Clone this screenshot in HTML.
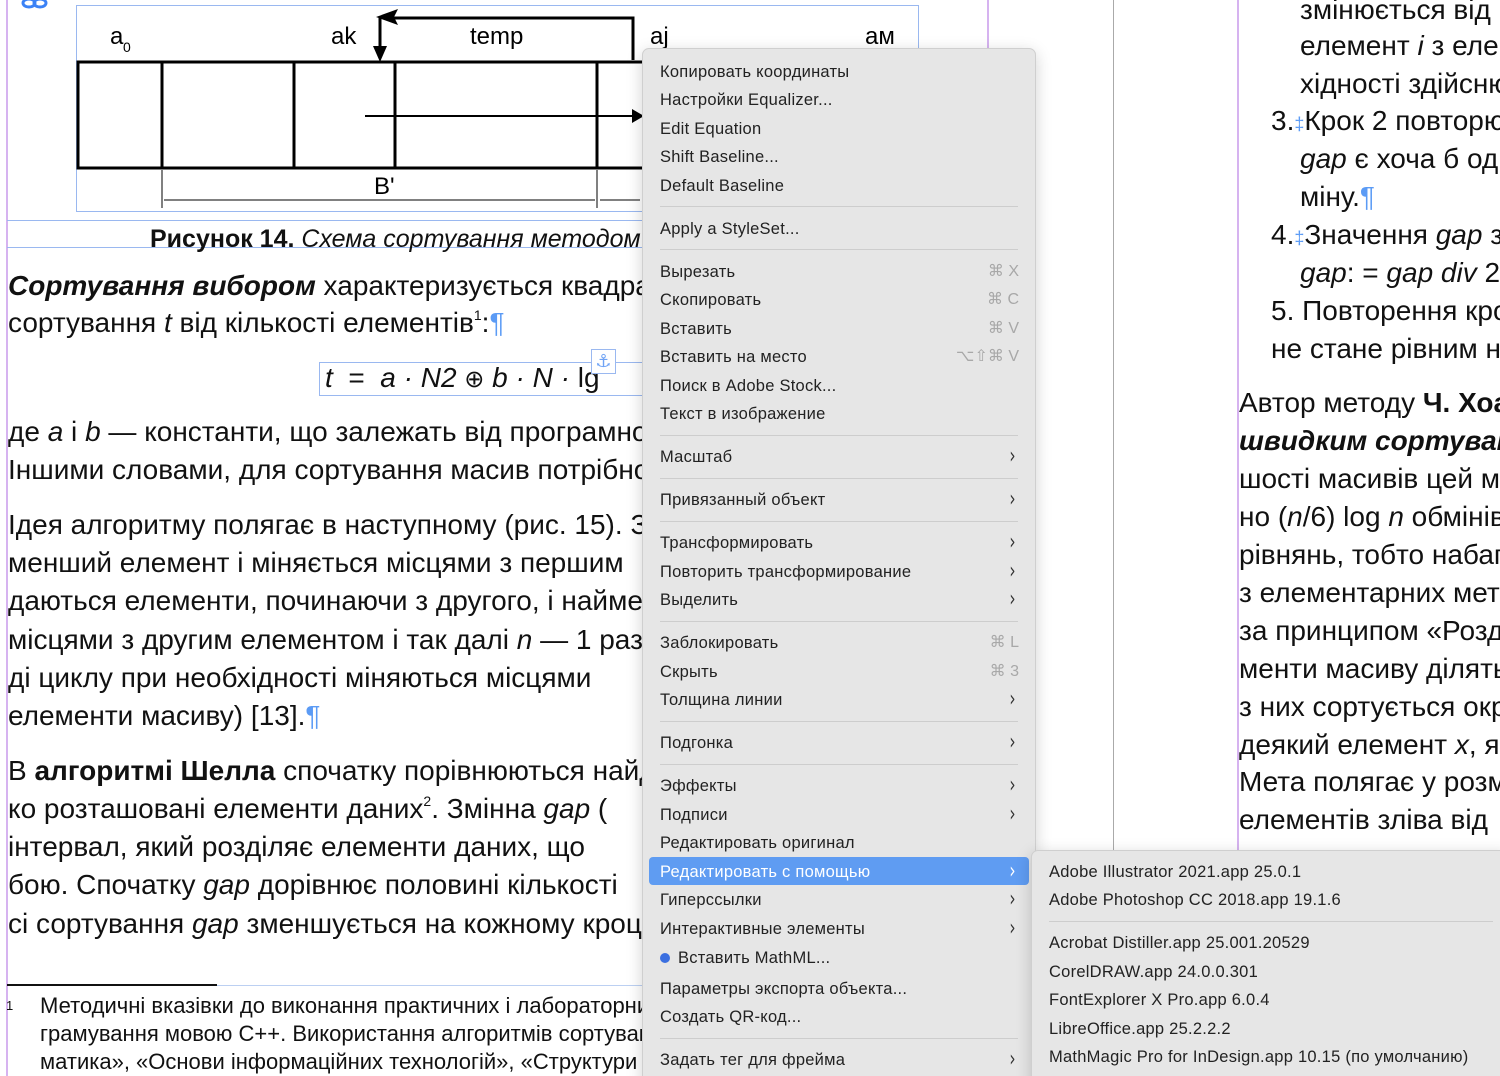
<!DOCTYPE html>
<html><head><meta charset="utf-8"><style>
*{margin:0;padding:0;box-sizing:border-box}
html,body{width:1500px;height:1076px;overflow:hidden}
body{background:#fff;position:relative;font-family:"Liberation Sans","DejaVu Sans",sans-serif;color:#111}
.t{position:absolute;white-space:nowrap;font-size:28px;line-height:38px;letter-spacing:0}
.fn{position:absolute;white-space:nowrap;font-size:22px;line-height:28px;letter-spacing:0}
.b{font-weight:bold}.i{font-style:italic}
sup{font-size:14px;line-height:0;vertical-align:0;position:relative;top:-12px}
.pm{color:#5b9bf5}
.menu{position:absolute;left:642px;top:48px;width:394px;height:1040px;background:#e6e6e6;border:1px solid #cfcfcf;border-radius:7px;box-shadow:0 4px 16px rgba(0,0,0,.18);z-index:5}
.sub{position:absolute;left:1031px;top:850px;width:480px;height:240px;background:#e6e6e6;border:1px solid #cfcfcf;border-radius:7px;box-shadow:0 4px 16px rgba(0,0,0,.18);z-index:6}
.mi{position:absolute;left:17px;font-size:16.5px;line-height:20px;color:#222;white-space:nowrap;letter-spacing:0.25px}
.sc{position:absolute;right:16px;font-size:16px;line-height:20px;color:#a8a8a8;white-space:nowrap}
.ar{position:absolute;right:18px;font-size:22px;line-height:20px;color:#333;font-family:"DejaVu Sans",sans-serif;transform:scaleX(0.7)}
.sep{position:absolute;left:17px;right:17px;height:1px;background:#cdcdcd}
.hl{position:absolute;left:6px;right:6px;height:28px;background:#5f9cf2;border-radius:4px}
</style></head><body>
<div style="position:absolute;left:6px;top:0;width:2px;height:1076px;background:#d6b3f0"></div>
<div style="position:absolute;left:987px;top:0;width:2px;height:50px;background:#d6b3f0"></div>
<div style="position:absolute;left:1113px;top:0;width:1px;height:1076px;background:#aaa"></div>
<div style="position:absolute;left:1237px;top:0;width:2px;height:1076px;background:#d6b3f0"></div>
<div style="position:absolute;left:7px;top:220px;width:640px;height:1px;background:#9ab8f0"></div>
<div style="position:absolute;left:7px;top:247px;width:640px;height:1px;background:#9ab8f0"></div>

<svg style="position:absolute;left:0;top:0" width="1000" height="220">
<rect x="76.5" y="5.5" width="842" height="206" fill="none" stroke="#9ab8f0"/>
<g fill="none" stroke="#3b82f6" stroke-width="3"><ellipse cx="29" cy="3" rx="6" ry="4"/><ellipse cx="40" cy="3" rx="6" ry="4"/></g>
<g stroke="#000" stroke-width="3" fill="none">
<rect x="78" y="62" width="600" height="106"/>
<line x1="162" y1="62" x2="162" y2="168"/><line x1="294" y1="62" x2="294" y2="168"/>
<line x1="395" y1="62" x2="395" y2="168"/><line x1="597" y1="62" x2="597" y2="168"/>
<polyline points="633,60 633,18 386,18"/>
<line x1="380" y1="18" x2="380" y2="52"/>
<line x1="365" y1="116" x2="636" y2="116" stroke-width="2"/>
</g>
<polygon points="376,17 398,9 394,17 398,25" fill="#000"/>
<polygon points="373,46 387,46 380,62" fill="#000"/>
<polygon points="644,116 632,109 632,123" fill="#000"/>
<g stroke="#000" stroke-width="1"><line x1="162" y1="170" x2="162" y2="208"/><line x1="597" y1="170" x2="597" y2="208"/><line x1="164" y1="200" x2="595" y2="200"/><line x1="600" y1="200" x2="640" y2="200"/></g>
<g font-family="Liberation Sans" font-size="24" fill="#000">
<text x="110" y="44">a</text><text x="123" y="52" font-size="14">0</text>
<text x="331" y="44">ak</text><text x="470" y="44">temp</text>
<text x="650" y="44">aj</text><text x="865" y="44">ам</text>
<text x="374" y="194">B'</text></g>
</svg>

<div class="t" style="top:220px;left:150px;font-size:25px"><span class="b">Рисунок 14.</span> <span class="i">Схема сортування методом вибору</span></div>
<div class="t" style="top:267px;left:8px"><span class="b i">Сортування вибором</span> характеризується квадратичною</div>
<div class="t" style="top:304px;left:8px">сортування <span class="i">t</span> від кількості елементів<sup>1</sup>:<span class="pm">¶</span></div>
<div style="position:absolute;left:319px;top:362px;width:330px;height:34px;border:1px solid #9ab8f0"></div>
<div class="t i" style="top:359px;left:325px">t&nbsp; <span style="font-style:normal">=</span>&nbsp; a · N2 <span style="font-style:normal;font-size:24px">⊕</span> b · N · <span style="font-style:normal">lg</span></div>
<div style="position:absolute;left:591px;top:349px;width:25px;height:25px;border:1px solid #9ab8f0;color:#6fa3f5;font-size:18px;text-align:center;line-height:22px;background:#fff">⚓</div>
<div class="t" style="top:413px;left:8px">де <span class="i">a</span> і <span class="i">b</span> — константи, що залежать від програмної</div>
<div class="t" style="top:451px;left:8px">Іншими словами, для сортування масив потрібно</div>
<div class="t" style="top:506px;left:8px">Ідея алгоритму полягає в наступному (рис. 15). Знаходиться</div>
<div class="t" style="top:544px;left:8px">менший елемент і міняється місцями з першим</div>
<div class="t" style="top:582px;left:8px">даються елементи, починаючи з другого, і найменший</div>
<div class="t" style="top:621px;left:8px">місцями з другим елементом і так далі <span class="i">n</span> — 1 раз</div>
<div class="t" style="top:659px;left:8px">ді циклу при необхідності міняються місцями</div>
<div class="t" style="top:697px;left:8px">елементи масиву) [13].<span class="pm">¶</span></div>
<div class="t" style="top:752px;left:8px">В <span class="b">алгоритмі Шелла</span> спочатку порівнюються найдалі</div>
<div class="t" style="top:790px;left:8px">ко розташовані елементи даних<sup>2</sup>. Змінна <span class="i">gap</span> (</div>
<div class="t" style="top:828px;left:8px">інтервал, який розділяє елементи даних, що</div>
<div class="t" style="top:866px;left:8px">бою. Спочатку <span class="i">gap</span> дорівнює половині кількості</div>
<div class="t" style="top:905px;left:8px">сі сортування <span class="i">gap</span> зменшується на кожному кроці</div>
<div style="position:absolute;left:7px;top:984px;width:210px;height:2px;background:#111"></div>
<div style="position:absolute;left:217px;top:985px;width:430px;height:1px;background:#bcd0f2"></div>
<div class="fn" style="top:992px;left:6px;font-size:13px">1</div>
<div class="fn" style="top:992px;left:40px">Методичні вказівки до виконання практичних і лабораторних</div>
<div class="fn" style="top:1020px;left:40px">грамування мовою С++. Використання алгоритмів сортування</div>
<div class="fn" style="top:1048px;left:40px">матика», «Основи інформаційних технологій», «Структури</div>

<div class="t" style="top:-9px;left:1300px">змінюється від</div>
<div class="t" style="top:27px;left:1300px">елемент <span class="i">i</span> з елементом</div>
<div class="t" style="top:65px;left:1300px">хідності здійснюється</div>
<div class="t" style="top:102px;left:1271px">3.<span class="pm" style="font-size:18px">‡</span>Крок 2 повторюється</div>
<div class="t" style="top:140px;left:1300px"><span class="i">gap</span> є хоча б одна</div>
<div class="t" style="top:178px;left:1300px">міну.<span class="pm">¶</span></div>
<div class="t" style="top:216px;left:1271px">4.<span class="pm" style="font-size:18px">‡</span>Значення <span class="i">gap</span> зменшується</div>
<div class="t" style="top:254px;left:1300px"><span class="i">gap</span>: = <span class="i">gap div</span> 2</div>
<div class="t" style="top:292px;left:1271px">5. Повторення кроків</div>
<div class="t" style="top:330px;left:1271px">не стане рівним нулю</div>
<div class="t" style="top:384px;left:1239px">Автор методу <span class="b">Ч. Хоар</span></div>
<div class="t b i" style="top:422px;left:1239px">швидким сортуванням</div>
<div class="t" style="top:460px;left:1239px">шості масивів цей метод</div>
<div class="t" style="top:498px;left:1239px">но (<span class="i">n</span>/6) log <span class="i">n</span> обмінів</div>
<div class="t" style="top:536px;left:1239px">рівнянь, тобто набагато</div>
<div class="t" style="top:574px;left:1239px">з елементарних методів</div>
<div class="t" style="top:612px;left:1239px">за принципом «Розділяй</div>
<div class="t" style="top:650px;left:1239px">менти масиву ділять</div>
<div class="t" style="top:688px;left:1239px">з них сортується окремо</div>
<div class="t" style="top:726px;left:1239px">деякий елемент <span class="i">x</span>, який</div>
<div class="t" style="top:763px;left:1239px">Мета полягає у розміщенні</div>
<div class="t" style="top:801px;left:1239px">елементів зліва від</div>

<div class="menu">
<div class="mi" style="top:13px">Копировать координаты</div>
<div class="mi" style="top:41px">Настройки Equalizer...</div>
<div class="mi" style="top:70px">Edit Equation</div>
<div class="mi" style="top:98px">Shift Baseline...</div>
<div class="mi" style="top:127px">Default Baseline</div>
<div class="sep" style="top:157px"></div>
<div class="mi" style="top:170px">Apply a StyleSet...</div>
<div class="sep" style="top:200px"></div>
<div class="mi" style="top:213px">Вырезать</div><div class="sc" style="top:213px">⌘ X</div>
<div class="mi" style="top:241px">Скопировать</div><div class="sc" style="top:241px">⌘ C</div>
<div class="mi" style="top:270px">Вставить</div><div class="sc" style="top:270px">⌘ V</div>
<div class="mi" style="top:298px">Вставить на место</div><div class="sc" style="top:298px">⌥⇧⌘ V</div>
<div class="mi" style="top:327px">Поиск в Adobe Stock...</div>
<div class="mi" style="top:355px">Текст в изображение</div>
<div class="sep" style="top:386px"></div>
<div class="mi" style="top:398px">Масштаб</div><div class="ar" style="top:398px">›</div>
<div class="sep" style="top:429px"></div>
<div class="mi" style="top:441px">Привязанный объект</div><div class="ar" style="top:441px">›</div>
<div class="sep" style="top:472px"></div>
<div class="mi" style="top:484px">Трансформировать</div><div class="ar" style="top:484px">›</div>
<div class="mi" style="top:513px">Повторить трансформирование</div><div class="ar" style="top:513px">›</div>
<div class="mi" style="top:541px">Выделить</div><div class="ar" style="top:541px">›</div>
<div class="sep" style="top:572px"></div>
<div class="mi" style="top:584px">Заблокировать</div><div class="sc" style="top:584px">⌘ L</div>
<div class="mi" style="top:613px">Скрыть</div><div class="sc" style="top:613px">⌘ 3</div>
<div class="mi" style="top:641px">Толщина линии</div><div class="ar" style="top:641px">›</div>
<div class="sep" style="top:672px"></div>
<div class="mi" style="top:684px">Подгонка</div><div class="ar" style="top:684px">›</div>
<div class="sep" style="top:715px"></div>
<div class="mi" style="top:727px">Эффекты</div><div class="ar" style="top:727px">›</div>
<div class="mi" style="top:756px">Подписи</div><div class="ar" style="top:756px">›</div>
<div class="mi" style="top:784px">Редактировать оригинал</div>
<div class="hl" style="top:808px"></div>
<div class="mi" style="top:813px;color:#fff">Редактировать с помощью</div><div class="ar" style="top:813px;color:#fff">›</div>
<div class="mi" style="top:841px">Гиперссылки</div><div class="ar" style="top:841px">›</div>
<div class="mi" style="top:870px">Интерактивные элементы</div><div class="ar" style="top:870px">›</div>
<div style="position:absolute;left:17px;top:904px;width:10px;height:10px;border-radius:50%;background:#3b6fe0"></div>
<div class="mi" style="top:899px;left:35px">Вставить MathML...</div>
<div class="mi" style="top:930px">Параметры экспорта объекта...</div>
<div class="mi" style="top:958px">Создать QR-код...</div>
<div class="sep" style="top:989px"></div>
<div class="mi" style="top:1001px">Задать тег для фрейма</div><div class="ar" style="top:1001px">›</div>
</div>

<div class="sub">
<div class="mi" style="top:11px">Adobe Illustrator 2021.app 25.0.1</div>
<div class="mi" style="top:39px">Adobe Photoshop CC 2018.app 19.1.6</div>
<div class="sep" style="top:70px;right:17px"></div>
<div class="mi" style="top:82px">Acrobat Distiller.app 25.001.20529</div>
<div class="mi" style="top:111px">CorelDRAW.app 24.0.0.301</div>
<div class="mi" style="top:139px">FontExplorer X Pro.app 6.0.4</div>
<div class="mi" style="top:168px">LibreOffice.app 25.2.2.2</div>
<div class="mi" style="top:196px">MathMagic Pro for InDesign.app 10.15 (по умолчанию)</div>
</div>
</body></html>
